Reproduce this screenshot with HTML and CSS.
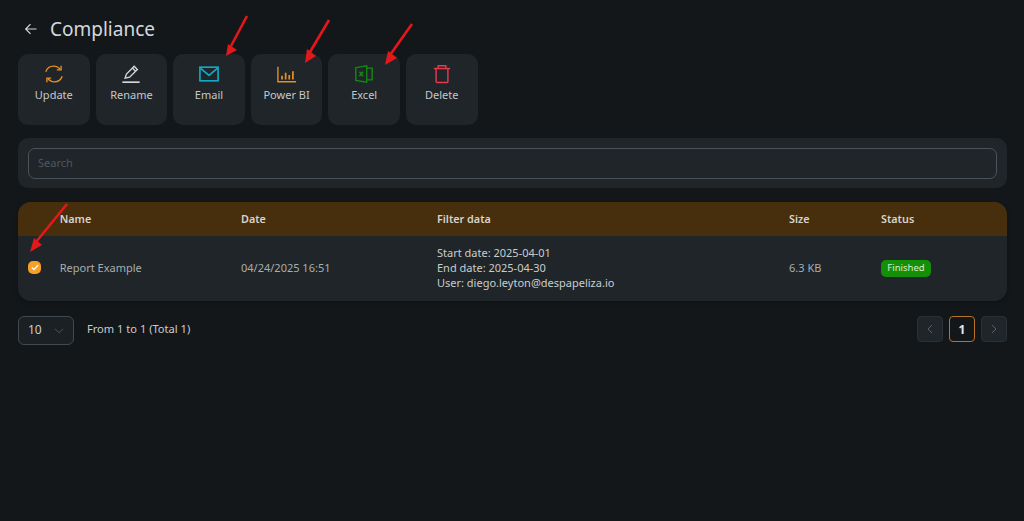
FILE: index.html
```html
<!DOCTYPE html>
<html lang="en">
<head>
<meta charset="utf-8">
<title>Compliance</title>
<link rel="stylesheet" href="styles.css">
</head>
<body>
<main class="page">
  <header class="title-row">
    <svg class="back" width="14" height="14" viewBox="0 0 14 14" fill="none" stroke="#d5d8da" stroke-width="1.2"><path d="M12.500 7H1.800M6.500 2.200 1.700 7l4.800 4.800"/></svg>
    <h1>Compliance</h1>
  </header>
  <nav class="actions">
    <button class="action">
      <svg class="icon" viewBox="0 0 22 22" fill="none" stroke="#e98f21" stroke-width="1.500"><path d="M2 8.500C3.200 4.700 6.700 2.300 10.600 2.300c3 0 5.600 1.400 7.100 3.800"/><path d="M18.800 1.800v4.700h-4.700"/><path d="M20 13.500c-1.200 3.800-4.700 6.200-8.600 6.200-3 0-5.600-1.400-7.100-3.800"/><path d="M3.200 20.200v-4.700h4.700"/></svg>
      <span>Update</span>
    </button>
    <button class="action">
      <svg class="icon" viewBox="0 0 22 22" fill="none" stroke="#d5d8da" stroke-width="1.500"><path d="M4.500 15.500 6 11 14.500 2.500l3.500 3.500-8.500 8.500z"/><path d="M12.500 4.500l3.500 3.500"/><path d="M1.500 20h19" stroke-width="1.800"/></svg>
      <span>Rename</span>
    </button>
    <button class="action">
      <svg class="icon" viewBox="0 0 22 22" fill="none" stroke="#13a9c4" stroke-width="1.800"><rect x="1" y="3.500" width="20" height="15"/><path d="M1.500 4.500l9.500 8 9.500-8"/></svg>
      <span>Email</span>
    </button>
    <button class="action">
      <svg class="icon" viewBox="0 0 22 22" fill="none" stroke="#e98f21" stroke-width="1.500"><path d="M1 3v16.500h20"/><path d="M5.500 13v4M9.500 9.500V17M13.500 12v5M17.500 8v9" stroke-width="1.900"/></svg>
      <span>Power BI</span>
    </button>
    <button class="action">
      <svg class="icon" viewBox="0 0 22 22" fill="none" stroke="#128a12" stroke-width="1.500"><path d="M2 4 14 2v18L2 18z"/><path d="M14 4.500h6v13h-6"/><path d="M6 8.500l4 5M10 8.500l-4 5" stroke-width="1.700"/></svg>
      <span>Excel</span>
    </button>
    <button class="action">
      <svg class="icon" viewBox="0 0 22 22" fill="none" stroke="#e43a4c" stroke-width="1.600"><path d="M2 5h18"/><path d="M6.800 4.800V2h8.400v2.800"/><path d="M4.500 5.500v13.800q0 1 1 1h11q1 0 1-1V5.500"/></svg>
      <span>Delete</span>
    </button>
  </nav>
  <section class="search-card">
    <div class="search-input">Search</div>
  </section>
  <section class="table-card">
    <div class="grid head">
      <div></div><div>Name</div><div>Date</div><div>Filter data</div><div>Size</div><div>Status</div>
    </div>
    <div class="grid row">
      <div><span class="check"><svg width="8" height="7" viewBox="0 0 8 7" fill="none" stroke="#fff" stroke-width="1.300"><path d="M.8 3.600l2.200 2L7.200 1"/></svg></span></div>
      <div>Report Example</div>
      <div>04/24/2025 16:51</div>
      <div class="filter">Start date: 2025-04-01<br>End date: 2025-04-30<br>User: diego.leyton@despapeliza.io</div>
      <div>6.3 KB</div>
      <div><span class="badge">Finished</span></div>
    </div>
  </section>
  <footer class="pager">
    <div class="size-select">
      <span>10</span>
      <svg width="10" height="6" viewBox="0 0 10 6" fill="none" stroke="#4e575c" stroke-width="1"><path d="M1 .8l4 4 4-4"/></svg>
    </div>
    <div class="range">From 1 to 1 (Total 1)</div>
    <div class="pages">
      <span class="page-btn"><svg width="6" height="10" viewBox="0 0 6 10" fill="none" stroke="#596267" stroke-width="1"><path d="M5 1 1 5l4 4"/></svg></span>
      <span class="page-btn current">1</span>
      <span class="page-btn"><svg width="6" height="10" viewBox="0 0 6 10" fill="none" stroke="#596267" stroke-width="1"><path d="m1 1 4 4-4 4"/></svg></span>
    </div>
  </footer>
</main>
<svg class="arrows" width="1024" height="521" viewBox="0 0 1024 521" fill="#e3181b" stroke="none">
  <g stroke="#e3181b" stroke-width="2.600"><path d="M247 16 231 46"/><path d="M329 20 310 52"/><path d="M412 24 390 55"/><path d="M67 204 36 242"/></g>
  <path d="m226 56 11-6-9-6z"/>
  <path d="m305 63 11-7-9-7z"/>
  <path d="m385 65 12-7-9-7z"/>
  <path d="m30 252 12-7-8-7z"/>
</svg>
</body>
</html>
```
FILE: styles.css
```css
* { box-sizing: border-box; }
html, body { margin: 0; height: 100%; }
body {
  background: #13171a;
  color: #c9cdcf;
  font-family: "Noto Sans", sans-serif;
  font-size: 11px;
  overflow: hidden;
}
.page { padding: 14px 17px 0 18px; }
.title-row { display: flex; align-items: center; height: 30px; padding-left: 6px; gap: 12px; }
.title-row h1 { margin: 0; font-size: 19px; font-weight: 400; color: #d5d8da; line-height: 30px; }
.back { flex: none; }
.actions { display: flex; gap: 6px; margin-top: 10px; }
.action {
  width: 71.600px;
  height: 71px;
  border: 0;
  border-radius: 10px;
  background: #1f2529;
  color: #c4c8ca;
  font: 11px "Noto Sans", sans-serif;
  display: flex;
  flex-direction: column;
  align-items: center;
  padding: 10px 0 0;
  gap: 2px;
}
.icon { width: 20px; height: 20px; flex: none; }
.action span { line-height: 18px; }
.search-card {
  margin-top: 13px;
  height: 50px;
  background: #1f2529;
  border-radius: 10px;
  padding: 10px 10px 9px 10px;
}
.search-input {
  height: 31px;
  border: 1px solid #4b5358;
  border-radius: 7px;
  padding-left: 9px;
  line-height: 28px;
  font-size: 11px;
  color: #50585d;
}
.table-card {
  margin-top: 14px;
  background: #1f2529;
  border-radius: 13px;
  overflow: hidden;
  box-shadow: 0 2px 4px rgba(0,0,0,.2);
}
.grid { display: grid; grid-template-columns: 41.700px 181.300px 196px 352px 92px 1fr; align-items: center; }
.head { height: 34px; background: #472e0d; color: #d8d3cb; font-weight: 600; font-size: 10.800px; padding-bottom: 2px; }
.row { height: 65px; color: #a8adb0; font-size: 11px; padding-bottom: 2px; }
.row > div:first-child { padding-left: 10px; display: flex; }
.filter { color: #c9cdcf; line-height: 15px; font-size: 11px; }
.check {
  width: 13px; height: 13px; border-radius: 5px; background: #f7a029;
  display: flex; align-items: center; justify-content: center;
}
.badge {
  display: inline-block;
  width: 50px; height: 17px;
  line-height: 15px;
  text-align: center;
  background: #149007;
  border-radius: 5px;
  font-size: 9.500px;
  color: #d7ecd3;
}
.pager { display: flex; align-items: center; margin-top: 15px; }
.size-select {
  width: 56px; height: 29px;
  border: 1px solid #41494e;
  border-radius: 6px;
  background: #1b2024;
  display: flex; align-items: center; justify-content: space-between;
  padding: 0 9px 2px;
  color: #c9cdcf;
  font-size: 12px;
}
.size-select svg { margin-top: 2px; }
.range { margin-left: 13px; margin-bottom: 4px; font-size: 11.100px; color: #c9cdcf; }
.pages { margin-left: auto; display: flex; gap: 6px; align-self: flex-start; }
.page-btn {
  width: 26px; height: 26px;
  border: 1px solid #2a3136;
  border-radius: 4px;
  background: #1f2529;
  display: flex; align-items: center; justify-content: center;
}
.page-btn.current { border-color: #b87327; background: #13171a; color: #e6e8e9; font-weight: 700; font-size: 12px; }
.arrows { position: absolute; left: 0; top: 0; pointer-events: none; }
```
